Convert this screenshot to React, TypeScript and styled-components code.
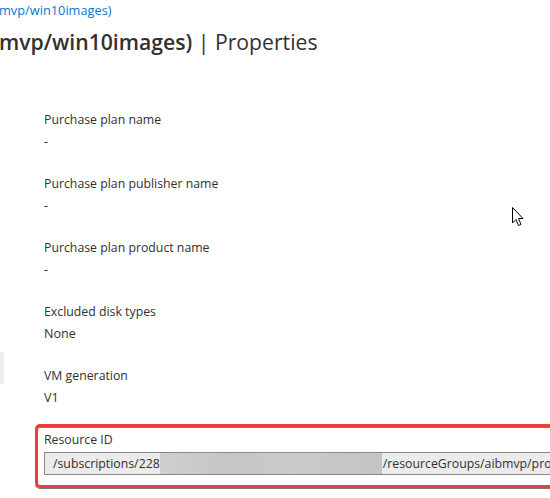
import React from "react";
import styled, { createGlobalStyle } from "styled-components";

const Global = createGlobalStyle`
  html, body { margin: 0; padding: 0; background: #ffffff; }
  body { font-family: "Open Sans", "Noto Sans", Arial, sans-serif; color: #323130; overflow: hidden; }
`;

const Page = styled.div`
  position: relative;
  width: 550px;
  height: 498px;
  overflow: hidden;
  display: flex;
  flex-direction: column;
`;

const Header = styled.header`
  display: flex;
  flex-direction: column;
  padding-top: 1px;
  white-space: nowrap;
`;

const Breadcrumb = styled.a`
  display: block;
  font-size: 12.8px;
  line-height: 19px;
  color: #0078d4;
  text-decoration: none;
  margin-left: -1px;
`;

const Title = styled.h1`
  margin: 8px 0 0 -1px;
  font-size: 21.2px;
  line-height: 28px;
  font-weight: 600;
  color: #323130;
`;

const TitleSuffix = styled.span`
  font-weight: 400;
`;

const Body = styled.div`
  display: flex;
  flex-direction: row;
  margin-top: 53px;
`;

const Rail = styled.nav`
  width: 4px;
  flex-shrink: 0;
  display: flex;
  flex-direction: column;
`;

const RailItem = styled.div<{ $offset: number }>`
  margin-top: ${(p) => p.$offset}px;
  height: 32px;
  background: #ededed;
`;

const Main = styled.main`
  flex: 1;
  min-width: 0;
  padding-left: 40px;
  display: flex;
  flex-direction: column;
`;

const Field = styled.div`
  display: flex;
  flex-direction: column;
  margin-bottom: 20px;
`;

const Label = styled.div`
  font-size: 12.3px;
  line-height: 22px;
  color: #323130;
`;

const Value = styled.div`
  font-size: 12.6px;
  line-height: 22px;
  color: #323130;
`;

const Highlight = styled.div`
  margin: -5px 0 0 -9px;
  padding: 2px 0 10px 6px;
  border: 3px solid #ee3b3b;
  border-right: none;
  border-radius: 5px 0 0 5px;
  box-shadow: 0 1px 0 #7a7a7a, inset 0 1px 0 #7a7a7a;
  display: flex;
  flex-direction: column;
`;

const ReadOnlyInput = styled.div`
  margin-top: 1px;
  height: 21px;
  border: 1px solid #8a8886;
  border-right: none;
  background: #ebebeb;
  display: flex;
  align-items: center;
  padding-left: 8px;
  font-size: 12.3px;
  white-space: nowrap;
  overflow: hidden;
  color: #323130;
`;

const Redacted = styled.span`
  display: inline-block;
  width: 222px;
  height: 21px;
  margin: 0 1px 0 0;
  background: linear-gradient(90deg, #cfcfcf 0%, #c6c6c6 30%, #cacaca 60%, #c4c4c4 100%);
  flex-shrink: 0;
`;

const Cursor = styled.svg`
  position: absolute;
  left: 512px;
  top: 207px;
`;

const fields: { label: string; value: string }[] = [
  { label: "Purchase plan name", value: "-" },
  { label: "Purchase plan publisher name", value: "-" },
  { label: "Purchase plan product name", value: "-" },
  { label: "Excluded disk types", value: "None" },
  { label: "VM generation", value: "V1" },
];

export default function App() {
  return (
    <Page>
      <Global />
      <Header>
        <Breadcrumb>mvp/win10images)</Breadcrumb>
        <Title>
          mvp/win10images) <TitleSuffix>| Properties</TitleSuffix>
        </Title>
      </Header>
      <Body>
        <Rail>
          <RailItem $offset={243} />
        </Rail>
        <Main>
          {fields.map((f) => (
            <Field key={f.label}>
              <Label>{f.label}</Label>
              <Value>{f.value}</Value>
            </Field>
          ))}
          <Highlight>
            <Label>Resource ID</Label>
            <ReadOnlyInput>
              <span>/subscriptions/228</span>
              <Redacted />
              <span>/resourceGroups/aibmvp/providers/Microsoft.Compute/galleries</span>
            </ReadOnlyInput>
          </Highlight>
        </Main>
      </Body>
      <Cursor width="12" height="20" viewBox="0 0 12 20">
        <path
          d="M0.5 0.5 L0.5 16 L4 12.5 L6.5 18.5 L9 17.5 L6.5 11.5 L11 11.5 Z"
          fill="#ffffff"
          stroke="#000000"
          strokeWidth="1"
          strokeLinejoin="miter"
        />
      </Cursor>
    </Page>
  );
}
